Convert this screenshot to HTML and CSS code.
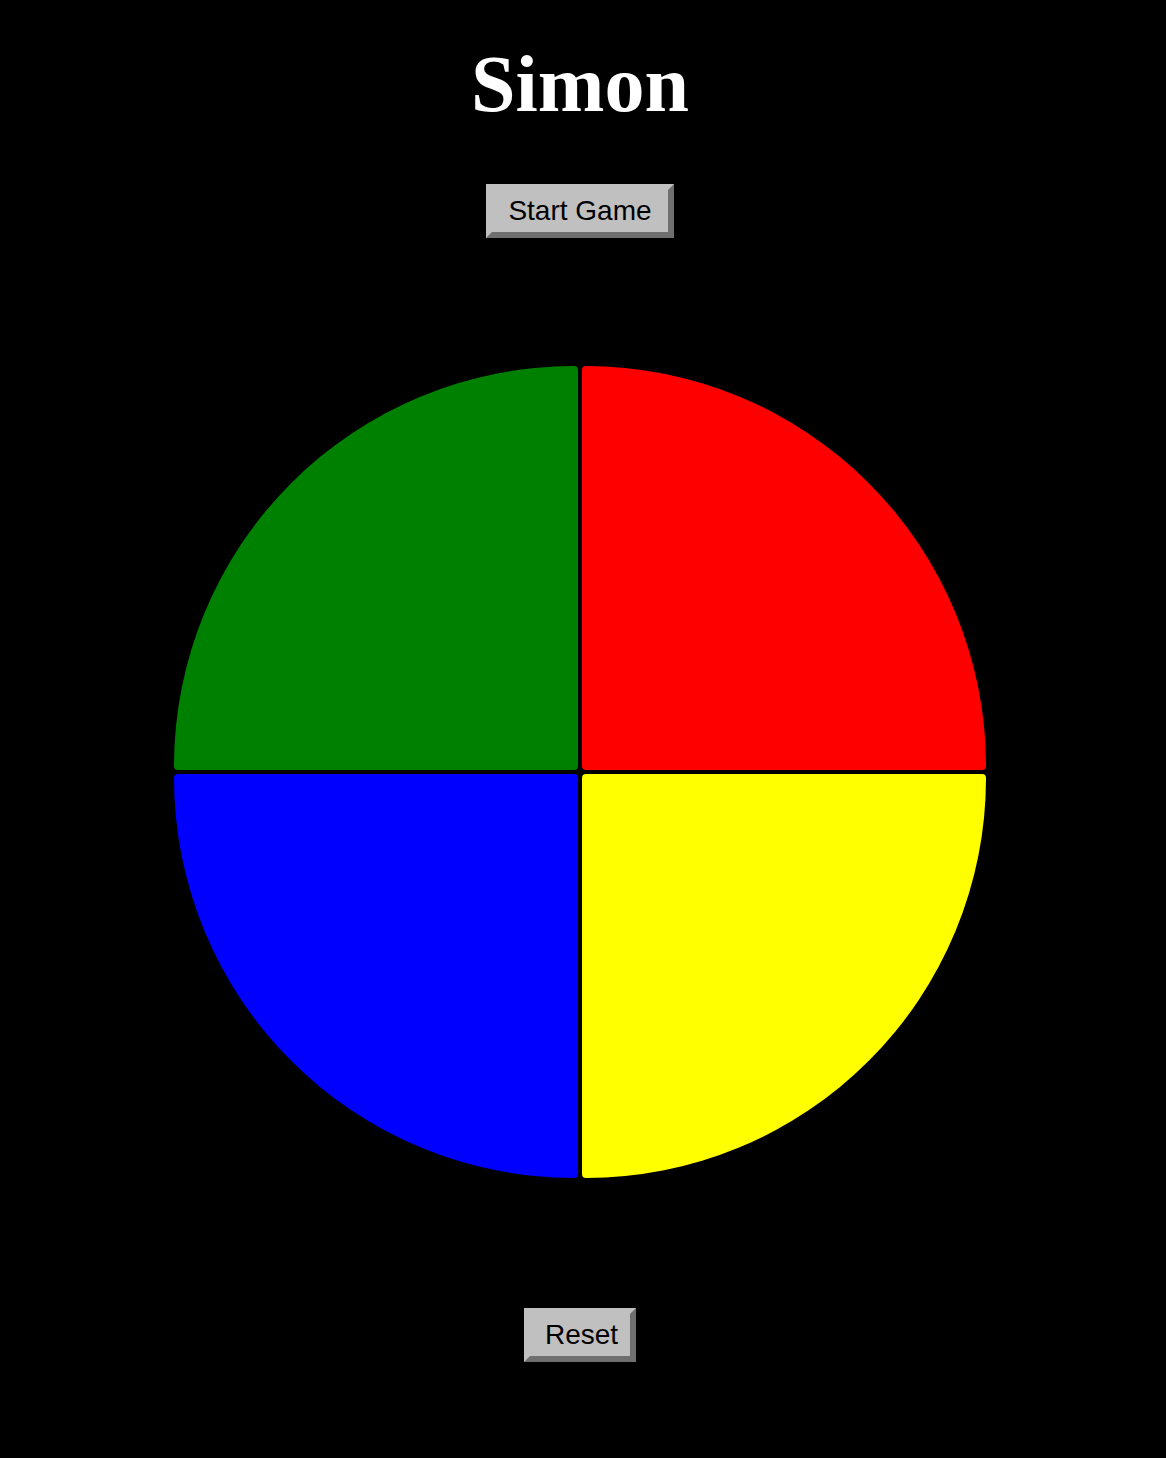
FILE: index.html
```html
<!DOCTYPE html>
<html>
<head>
<meta charset="utf-8">
<title>Simon</title>
<link rel="stylesheet" href="styles.css">
</head>
<body>
<main class="page">
  <h1 class="title">Simon</h1>
  <button class="btn btn-start">Start Game</button>
  <div class="board">
    <div class="pad pad-green"></div>
    <div class="pad pad-red"></div>
    <div class="pad pad-blue"></div>
    <div class="pad pad-yellow"></div>
  </div>
  <button class="btn btn-reset">Reset</button>
</main>
</body>
</html>
```
FILE: styles.css
```css
html, body {
  margin: 0;
  padding: 0;
  background: #000;
  height: 100%;
}
.page {
  display: flex;
  flex-direction: column;
  align-items: center;
  padding-top: 38px;
  padding-right: 6px;
}
.title {
  margin: 0;
  font-family: "Liberation Serif", "Times New Roman", serif;
  font-weight: bold;
  font-size: 80px;
  line-height: 92px;
  height: 92px;
  color: #fff;
}
.btn {
  font-family: "Liberation Sans", Arial, sans-serif;
  font-size: 28px;
  line-height: 42px;
  height: 54px;
  box-sizing: border-box;
  color: #000;
  background: #c0c0c0;
  border: 6px solid;
  border-color: #c0c0c0 #6f6f6f #6f6f6f #c0c0c0;
  padding: 0 15px;
  margin: 0;
  cursor: pointer;
}
.btn-start {
  margin-top: 54px;
  width: 188px;
}
.btn-reset {
  margin-top: 130px;
  width: 112px;
}
.board {
  margin-top: 128px;
  display: grid;
  grid-template-columns: 404px 404px;
  grid-template-rows: 404px 404px;
  gap: 4px;
}
.pad {
  border-radius: 4px;
}
.pad-green {
  background: #008000;
  border-top-left-radius: 404px;
}
.pad-red {
  background: #ff0000;
  border-top-right-radius: 404px;
}
.pad-blue {
  background: #0000ff;
  border-bottom-left-radius: 404px;
}
.pad-yellow {
  background: #ffff00;
  border-bottom-right-radius: 404px;
}
```
